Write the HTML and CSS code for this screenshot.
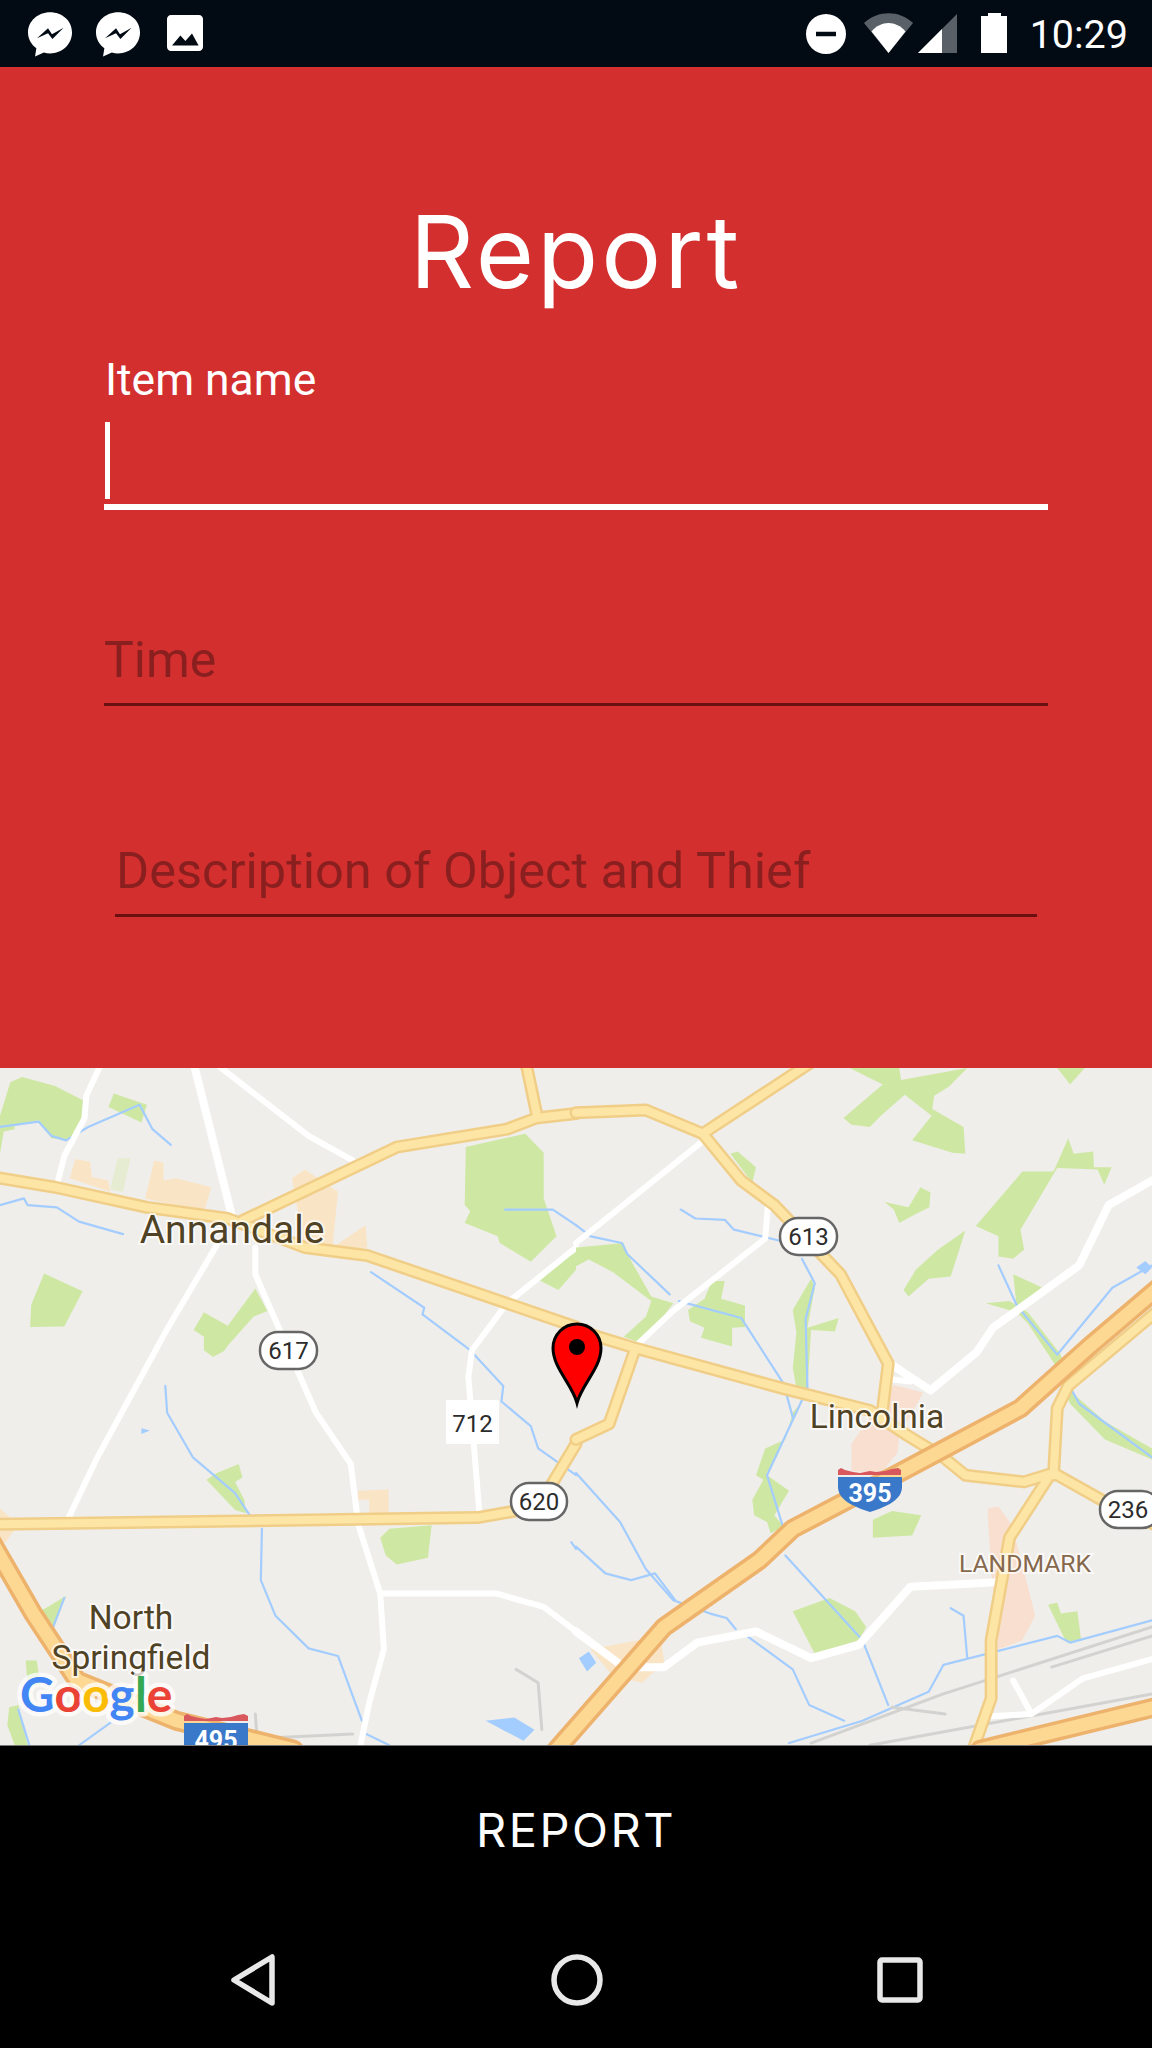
FILE: index.html
```html
<!DOCTYPE html>
<html lang="en">
<head>
<meta charset="utf-8">
<title>Report</title>
<link rel="stylesheet" href="styles.css">
</head>
<body>
<div class="screen">
  <header class="status-bar">
    <div class="status-group">
      <svg class="ic-msg" viewBox="2 2 20 20.2"><path fill-rule="evenodd" d="M12 2C6.500 2 2 6.100 2 11.200c0 2.900 1.500 5.500 3.800 7.200l-.6 3.700 4-1.800c.9.300 1.800.4 2.800.4 5.500 0 10-4.100 10-9.500S17.500 2 12 2zM6.100 13.800L11.100 9.300 12.900 12 18.200 9 13.100 14.100 11.100 11.500z"/></svg>
      <svg class="ic-msg" viewBox="2 2 20 20.2"><path fill-rule="evenodd" d="M12 2C6.500 2 2 6.100 2 11.200c0 2.900 1.500 5.500 3.800 7.200l-.6 3.700 4-1.800c.9.300 1.800.4 2.800.4 5.500 0 10-4.100 10-9.500S17.500 2 12 2zM6.100 13.800L11.100 9.300 12.900 12 18.200 9 13.100 14.100 11.100 11.500z"/></svg>
      <svg class="ic-photo" viewBox="3 3 18 18"><path fill-rule="evenodd" d="M21 19V5c0-1.100-.9-2-2-2H5c-1.100 0-2 .9-2 2v14c0 1.100.9 2 2 2h14c1.100 0 2-.9 2-2zM5.500 18.300L9.700 13.300 12.200 16 15.500 12.200 18.800 18.300z"/></svg>
    </div>
    <div class="status-group right">
      <svg class="ic-dnd" viewBox="0 0 40 40"><path d="M20 0a20 20 0 1 0 0 40a20 20 0 1 0 0-40zM10 17.700h20v4.600H10z" fill-rule="evenodd"/></svg>
      <svg class="ic-wifi" viewBox="0 0 49 40"><path class="dim" d="M0 10C14-3 35-3 49 10L24.500 40z"/><path d="M7.500 18.500C17 7 32 7 41.500 18.500L24.500 40z"/></svg>
      <svg class="ic-signal" viewBox="0 0 39 39"><path class="dim" d="M39 0V39H0z"/><path d="M24 15V39H0z"/></svg>
      <svg class="ic-battery" viewBox="0 0 26 40"><path d="M7 0h13v3h6v37H0V3h7z"/></svg>
      <span class="clock">10:29</span>
    </div>
  </header>

  <main class="form-panel">
    <h1 class="title">Report</h1>
    <div class="field-active">
      <div class="active-label">Item name</div>
      <div class="active-input"><span class="caret"></span></div>
    </div>
    <div class="field time-field">Time</div>
    <div class="field desc-field">Description of Object and Thief</div>
  </main>

  <svg class="map" viewBox="0 1068 1152 677" role="img" aria-label="Map">
    <defs>
      <path id="yl" class="ln" d="M-20,262 150,285 400,330 620,355 830,420 1000,438 1380,545 1568,598M660,360 1080,195 1380,155 1460,130 1568,120M1430,0 1462,125M-20,1040 1300,1025 1440,1005M1480,980 1568,860"/>
      <path id="yr" class="ln" d="M0,605 160,645 560,735 800,785 900,840 1000,890 1060,930 1220,945 1300,925 1430,985 1600,1050M0,118 190,112 345,165 450,270 540,325 720,480 850,680 835,780M345,165 650,0M0,850 90,815 160,650M1300,930 1310,780 1340,730 1600,550M1290,930 1180,1070 1130,1300 1130,1430 1070,1570"/>
      <path id="hl" class="ln" d="M-50,1040 90,1240 210,1390 480,1480 800,1545"/>
      <path id="hr" class="ln" d="M-80,1570 240,1270 500,1120 590,1050 880,925 1210,780 1400,640 1600,500M1100,1545 1600,1445"/>
    </defs>
    <rect x="0" y="1068" width="1152" height="677" class="land"/>

    <g transform="translate(0 1060) scale(.36735 .44643)">
      <g class="built">
        <path d="M190,265 205,222 245,228 250,262 295,270 300,295Z"/>
        <path d="M395,310 420,225 445,230 445,270 480,265 575,285 555,340Z"/>
        <path d="M795,265 830,245 920,295 905,420 995,370 1000,420 830,430Z"/>
        <path d="M975,965 1058,962 1058,1015 1005,1015 1005,985 975,985Z"/>
        <path d="M0,1005 50,1040 15,1080 0,1085Z"/>
      </g>
      <path class="pale" d="M300,290 320,220 355,220 335,295Z"/>
      <g class="green">
        <path d="M0,125 28,50 60,38 150,58 230,92 222,150 185,180 140,175 105,135 40,145 40,155 10,160 0,210Z"/>
        <path d="M295,105 310,75 400,100 385,140Z"/>
        <path d="M120,478 225,518 175,597 82,598 85,548Z"/>
        <path d="M527,605 555,565 620,595 695,512 728,562 690,575 620,640 610,652 580,665 555,650 555,620Z"/>
        <path d="M590,925 650,905 660,935 640,945 665,985 670,1015 640,1008 562,940Z"/>
        <path d="M1035,1070 1060,1050 1175,1042 1165,1115 1080,1130 1050,1110Z"/>
        <path d="M1268,195 1430,165 1480,208 1480,310 1515,395 1445,452 1360,410 1355,395 1265,365 1280,338 1265,325Z"/>
        <path d="M95,1240 130,1225 180,1200 140,1285Z"/>
        <path d="M70,1345 100,1345 110,1400 75,1400Z"/>
        <path d="M25,1450 50,1445 75,1535 40,1535 20,1490Z"/>
        <path d="M1460,490 1568,430 1568,470 1520,515Z"/>
      </g>
      <g class="water-line">
        <path class="ln" d="M0,150 105,138 140,170 180,180 240,150 380,100 415,155 465,190"/>
        <path class="ln" d="M0,325 65,310 75,325 155,330 215,362 335,390"/>
        <path class="ln" d="M1010,475 1155,555 1150,570 1280,650 1370,730 1365,765 1445,820 1465,870 1568,930"/>
        <path class="ln" d="M450,730 455,790 525,890 640,970 680,1020"/>
        <path class="ln" d="M713,1050 710,1165 750,1245 840,1318 920,1335 985,1480"/>
        <path class="ln" d="M985,1505 1060,1535M140,1280 175,1205M50,1455 80,1535M215,1535 300,1485M1375,335 1505,335 1568,370M1555,1080 1568,1095"/>
      </g>
      <path class="water" d="M1322,1480 1400,1473 1455,1500 1425,1525ZM385,825 408,830 385,838Z"/>
      <path class="rail ln" d="M695,1465 700,1520 960,1510M1405,1365 1465,1395 1475,1500"/>
      <g class="white-road">
        <path class="ln thick" d="M525,0 630,345"/>
        <path class="ln" d="M280,0 235,80 230,130 175,215 155,280"/>
        <path class="ln" d="M590,10 840,170 960,225"/>
        <path class="ln" d="M590,415 450,610 265,890 185,1028"/>
        <path class="ln" d="M695,420 695,480 860,790 955,905 975,1040 1035,1195 1045,1320 1005,1440 975,1560"/>
        <path class="ln" d="M1035,1195 1350,1195 1480,1225 1568,1280"/>
        <path class="ln" d="M1568,420 1380,545 1285,650 1275,710 1305,1015"/>
      </g>
      <use href="#yl" class="road-edge"/><use href="#yl" class="road-fill"/>
      <use href="#hl" class="high-edge"/><use href="#hl" class="high-fill"/>
    </g>

    <g transform="translate(576 1060) scale(.36735 .44643)">
      <g class="built-pink">
        <path d="M750,860 775,830 865,728 945,745 880,840 875,880 830,925 750,920Z"/>
        <path d="M1120,1005 1150,1000 1185,1040 1215,1130 1250,1245 1215,1300 1150,1320 1130,1140Z"/>
      </g>
      <path class="built" d="M40,1320 230,1290 240,1350 180,1395 100,1380Z"/>
      <g class="green">
        <path d="M745,18 880,18 885,45 1065,18 1015,60 975,80 970,110 1055,150 1060,210 1025,208 915,180 968,125 895,78 830,125 800,150 750,145 728,130 835,55Z"/>
        <path d="M840,318 905,330 938,285 965,297 962,330 925,345 880,365 865,335Z"/>
        <path d="M1088,372 1215,250 1300,250 1340,175 1355,210 1408,205 1410,240 1458,240 1438,280 1420,245 1310,242 1210,380 1220,425 1190,445 1150,440 1150,395Z"/>
        <path d="M892,515 925,470 985,425 1060,382 1020,485 960,490 905,530Z"/>
        <path d="M1310,18 1385,18 1345,55Z"/>
        <path d="M0,420 130,410 140,435 205,530 265,545 180,635 130,620 190,575 205,540 100,475 35,447 0,462Z"/>
        <path d="M305,560 350,535 370,495 405,495 395,535 460,550 460,598 425,600 425,642 340,622 350,600 310,585Z"/>
        <path d="M420,210 440,205 490,240 480,275Z"/>
        <path d="M590,560 640,490 650,510 630,600 715,578 705,608 640,605 630,735 600,735 590,690 600,610Z"/>
        <path d="M490,930 515,870 570,850 590,790 610,770 520,930 580,965 540,1020 565,1045 530,1060 520,1035 485,1020 480,985 510,940Z"/>
        <path d="M808,1030 860,1010 940,1020 915,1065 808,1070Z"/>
        <path d="M590,1235 690,1205 760,1235 790,1270 770,1300 650,1330Z"/>
        <path d="M1285,1220 1310,1215 1320,1240 1365,1235 1375,1300 1335,1305Z"/>
        <path d="M1115,545 1180,540 1230,565 1320,660 1350,745 1440,810 1568,870 1568,895 1440,850 1345,770 1310,690 1230,590 1200,565Z"/>
        <path d="M1190,480 1270,510 1200,555Z"/>
      </g>
      <g class="water-line">
        <path class="ln" d="M0,370 40,395 125,410 140,435 255,525"/>
        <path class="ln" d="M285,335 325,355 405,358 430,380 555,405"/>
        <path class="ln" d="M615,445 650,500 625,580 630,735 605,780 520,930 565,1050"/>
        <path class="ln" d="M280,540 450,578 565,725 590,800"/>
        <path class="ln" d="M0,925 120,1035 190,1140 265,1210 365,1240 410,1250 435,1275"/>
        <path class="ln" d="M570,1110 780,1300 850,1445"/>
        <path class="ln" d="M0,1090 80,1150 150,1165 215,1150 270,1210"/>
        <path class="ln" d="M465,1290 590,1365 635,1445 730,1480"/>
        <path class="ln" d="M580,1530 780,1480 960,1415 1000,1355 1310,1290 1345,1305 1568,1255"/>
        <path class="ln" d="M1020,1228 1055,1245 1065,1340"/>
        <path class="ln" d="M1568,890 1370,770 1350,740M1150,460 1200,550 1310,660 1320,650 1460,510 1568,460"/>
      </g>
      <path class="water" d="M8,1340 35,1325 55,1350 30,1370ZM1525,465 1550,450 1568,465 1550,480Z"/>
      <path class="rail ln" d="M640,1530 1000,1420 1568,1270M1295,1360 1568,1290M800,1535 1568,1420M860,1450 1005,1465"/>
      <g class="white-road">
        <path class="ln" d="M340,185 0,410"/>
        <path class="ln" d="M170,635 260,565 515,400 522,330"/>
        <path class="ln thick" d="M0,1280 130,1360 240,1360 330,1305 490,1280 640,1340 770,1310 910,1180 1145,1170"/>
        <path class="ln thick" d="M855,680 965,740 1090,655 1135,600 1370,460 1450,325 1600,255"/>
        <path class="ln" d="M855,715 910,720M1190,1390 1240,1465 1130,1470M1240,1465 1380,1385 1600,1335"/>
      </g>
      <use href="#yr" class="road-edge"/><use href="#yr" class="road-fill"/>
      <use href="#hr" class="high-edge"/><use href="#hr" class="high-fill"/>
    </g>

    <rect class="shield" x="260" y="1332" width="57" height="37" rx="18"/>
    <text class="shield-text" x="288.500" y="1359">617</text>
    <rect class="shield" x="511" y="1483" width="56" height="37" rx="18"/>
    <text class="shield-text" x="539" y="1510">620</text>
    <rect class="shield" x="780" y="1218" width="57" height="37" rx="18"/>
    <text class="shield-text" x="808.500" y="1245">613</text>
    <rect class="shield" x="1100" y="1491" width="60" height="37" rx="18"/>
    <text class="shield-text" x="1128" y="1518">236</text>
    <rect class="plate" x="446" y="1400" width="53" height="44"/>
    <text class="shield-text" x="472.500" y="1432">712</text>

    <path class="i-red" d="M838,1475V1470l3-2 4,2 8,2 7,1 10,-2 6,1 9,-1 7,-2 6,-1 3,2V1475Z"/>
    <path class="i-blue" d="M838,1477H902V1487C902,1500 886,1507 870,1512 854,1507 838,1500 838,1487Z"/>
    <text class="i-text" x="870" y="1502">395</text>
    <path class="i-red" d="M184,1721V1716l3-2 4,2 8,2 7,1 10,-2 6,1 9,-1 7,-2 6,-1 4,2V1721Z"/>
    <path class="i-blue" d="M184,1723H248V1745H184Z"/>
    <text class="i-text" x="216" y="1749">495</text>

    <text class="place big" x="232" y="1243">Annandale</text>
    <text class="place" x="131" y="1629">North</text>
    <text class="place" x="131" y="1669">Springfield</text>
    <text class="place" x="877" y="1428">Lincolnia</text>
    <text class="place poi" x="1025" y="1572">LANDMARK</text>
    <text class="google" x="20" y="1712"><tspan class="g-blue">G</tspan><tspan class="g-red">o</tspan><tspan class="g-yellow">o</tspan><tspan class="g-blue">g</tspan><tspan class="g-green">l</tspan><tspan class="g-red">e</tspan></text>

    <path class="pin" d="M577,1403C572,1384 553,1368 553,1348A24,24 0 1 1 601,1348C601,1368 582,1384 577,1403Z"/>
    <circle class="pin-dot" cx="577" cy="1347" r="8"/>
  </svg>

  <footer class="footer">
    <div class="report-btn">REPORT</div>
    <nav class="nav-bar">
      <svg class="nav-back" viewBox="0 0 44 52"><path d="M41 3V49L3 26Z"/></svg>
      <svg class="nav-home" viewBox="0 0 52 52"><circle cx="26" cy="26" r="23"/></svg>
      <svg class="nav-recent" viewBox="0 0 46 46"><rect x="3" y="3" width="40" height="40" rx="2"/></svg>
    </nav>
  </footer>
</div>
</body>
</html>
```
FILE: styles.css
```css
* { box-sizing: border-box; }
html, body { margin: 0; padding: 0; background: #000; }
.screen { width: 1152px; height: 2048px; display: flex; flex-direction: column; overflow: hidden; }

.status-bar { height: 67px; background: #020b13; display: flex; justify-content: space-between; align-items: flex-start; padding: 0 24px 0 28px; flex: none; }
.status-group { display: flex; align-items: flex-start; }
.status-group svg { fill: #fff; display: block; }
.ic-msg { width: 44px; height: 45px; margin: 12px 24px 0 0; }
.ic-photo { width: 36px; height: 36px; margin-top: 15px; margin-left: 3px; }
.ic-dnd { width: 40px; height: 40px; margin-top: 14px; }
.ic-wifi { width: 49px; height: 40px; margin: 13px 0 0 18px; }
.ic-signal { width: 39px; height: 39px; margin: 14px 0 0 5px; }
.ic-battery { width: 26px; height: 40px; margin: 13px 0 0 24px; }
.dim { fill: #5a6067; }
.clock { font: 400 39.500px/46px Roboto, sans-serif; color: #fff; margin: 12px 0 0 23px; }

.form-panel { height: 1001px; background: #d32f2f; padding: 135px 104px 0; flex: none; }
.title { margin: 0; font: 400 100px/100px Inter, sans-serif; color: #fff; text-align: center; letter-spacing: 3px; }
.field-active { margin-top: 53px; }
.active-label { font: 400 44.400px/50px Roboto, sans-serif; color: #fff; padding-left: 1px; }
.active-input { margin-top: 17px; height: 88px; border-bottom: 6px solid #fff; }
.caret { display: block; width: 5px; height: 77px; background: #fff; margin-left: 1px; }
.field { font: 400 50.500px/56px Roboto, sans-serif; color: #8a1f1f; padding-bottom: 15px; border-bottom: 3px solid #6b1010; }
.time-field { margin-top: 122px; font-size: 50px; }
.desc-field { margin: 137px 11px 0; padding-left: 1px; }

.map { display: block; width: 1152px; height: 677px; flex: none; }
.land { fill: #f0eeea; }
.ln { fill: none; vector-effect: non-scaling-stroke; stroke-linejoin: round; stroke-linecap: round; }
.green { fill: #cee8a4; }
.built { fill: #fae4c6; }
.built-pink { fill: #f8dfd0; }
.pale { fill: #e6ecd2; }
.water { fill: #a3ccff; }
.water-line { stroke: #a3ccff; stroke-width: 2.200; }
.rail { stroke: #d2d2d0; stroke-width: 3; }
.white-road { stroke: #fff; stroke-width: 6; }
.white-road .thick { stroke-width: 8; }
.road-edge { stroke: #f0ce87; stroke-width: 13; }
.road-fill { stroke: #fde6a5; stroke-width: 8; }
.high-edge { stroke: #edb26c; stroke-width: 20; }
.high-fill { stroke: #fdd893; stroke-width: 13; }
.shield { fill: #fff; stroke: #666; stroke-width: 2.500; }
.plate { fill: #fff; }
.shield-text { font: 400 24px Roboto, sans-serif; fill: #2c2c2c; text-anchor: middle; }
.i-red { fill: #d9585e; }
.i-blue { fill: #3a78c9; }
.i-text { font: 700 25px Roboto, sans-serif; fill: #fff; text-anchor: middle; }
.place { font: 400 33.500px Roboto, sans-serif; fill: #4f4225; text-anchor: middle; stroke: rgba(255,255,255,.7); stroke-width: 4px; paint-order: stroke; }
.place.big { font-size: 39px; }
.place.poi { font-size: 24.700px; fill: #86694d; }
.google { font: 700 48px Lato, sans-serif; stroke: rgba(255,255,255,.75); stroke-width: 9px; paint-order: stroke; stroke-linejoin: round; }
.g-blue { fill: #4285f4; }
.g-red { fill: #ea4335; }
.g-yellow { fill: #fbbc05; }
.g-green { fill: #34a853; }
.pin { fill: #f00; stroke: #000; stroke-width: 3; }
.pin-dot { fill: #000; }

.footer { flex: 1; background: #000; border-top: 1px solid #777; display: flex; flex-direction: column; }
.report-btn { font: 400 47px/58px Inter, sans-serif; color: #fff; text-align: center; margin-top: 55px; letter-spacing: 2.500px; }
.nav-bar { display: flex; align-items: center; justify-content: center; margin-top: 95px; height: 52px; padding-left: 1px; }
.nav-bar svg { fill: none; stroke: #e8e8e8; stroke-width: 5.500; stroke-linejoin: round; display: block; }
.nav-back { width: 44px; height: 52px; margin-right: 276px; }
.nav-home { width: 52px; height: 52px; margin-right: 274px; }
.nav-recent { width: 46px; height: 46px; }
```
